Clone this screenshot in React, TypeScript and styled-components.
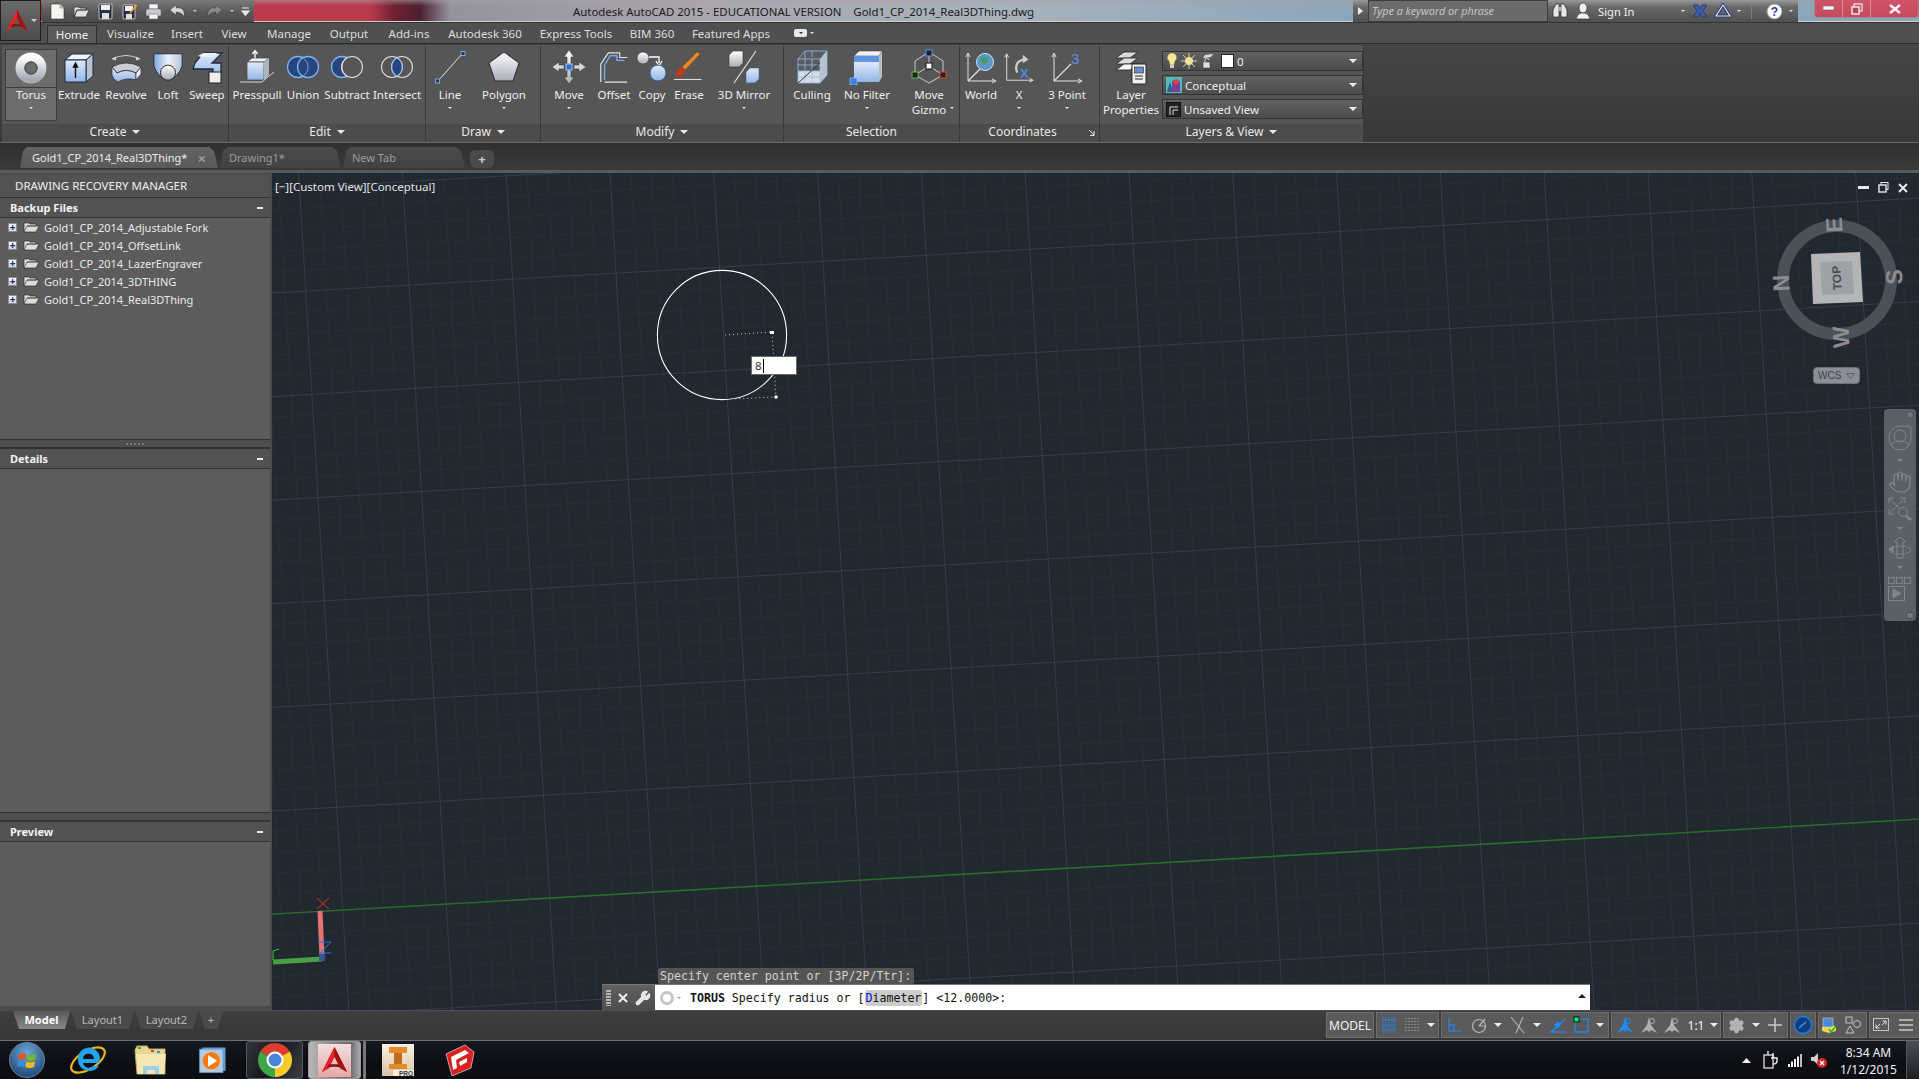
import React from "react";
import styled, { createGlobalStyle } from "styled-components";
import { Settings, Hand, Wrench } from "lucide-react";

const UI = `"Noto Sans", "Open Sans", sans-serif`;

const Global = createGlobalStyle`
  html, body { margin: 0; padding: 0; width: 1919px; height: 1079px; overflow: hidden; background: #3a3a3a; }
  #root { width: 1919px; height: 1079px; }
  * { box-sizing: border-box; }
`;

const Page = styled.div`
  position: relative; width: 1919px; height: 1079px; display: flex; flex-direction: column;
  font-family: ${UI}; font-size: 11.5px; color: #e6e6e6; overflow: hidden;
`;
const DefsSvg = styled.svg`position: absolute; width: 0; height: 0;`;

/* ---------- title bar ---------- */
const TitleBar = styled.header`
  height: 23px; flex: none; display: flex; align-items: flex-start; color: #1a1a1a;
  border-bottom: 1px solid #333;
  box-shadow: inset 0 -1px 0 #cfcfcf;
  background: linear-gradient(rgba(170,160,170,.55), rgba(170,160,170,0) 6px), linear-gradient(90deg, #a82a3a 0, #bc3a4c 250px, #b83a4c 370px, #6e2030 395px, #4a2030 420px, #94939d 450px, #a9a6ac 700px, #a7b3bd 1000px, #8da6b9 1350px, #8da6b9 1919px);
`;
const Qat = styled.div`
  margin-left: 42px; width: 212px; height: 22px; flex: none; display: flex; align-items: center; padding-left: 3px;
  background: linear-gradient(#7a7a7a, #585858 55%, #4c4c4c);
`;
const QatSlot = styled.span<{ $w: number }>`
  width: ${p => p.$w}px; height: 22px; display: flex; align-items: center; justify-content: center; flex: none;
`;
const WindowTitle = styled.div`
  flex: 1; padding-left: 319px; line-height: 23px; font-size: 11.4px; white-space: pre;
`;
const SearchStrip = styled.div`
  width: 445px; height: 22px; flex: none; display: flex; align-items: center; color: #eee;
  background: linear-gradient(#9a9a9a, #6a6a6a 30%, #505050);
`;
const SearchSlot = styled.span<{ $w: number }>`
  width: ${p => p.$w}px; height: 22px; flex: none; display: flex; align-items: center; justify-content: center;
`;
const SearchInput = styled.div`
  width: 180px; height: 22px; flex: none; border: 1px solid #3c3c3c; background: #6b6b6b;
  color: #c4c4c4; font-style: italic; line-height: 20px; padding-left: 3px; font-size: 10.8px;
`;
const SignIn = styled.span`
  width: 82px; flex: none; font-size: 11.2px; color: #f0f0f0; padding-left: 3px;
`;
const Divider = styled.span`width: 1px; height: 16px; background: #7c7c7c; margin: 0 10px 0 8px; flex: none;`;
const WinButtons = styled.div`
  margin-left: 16px; width: 105px; height: 18px; flex: none; display: flex;
  border: 1px solid #9a8a92; border-top: 0; border-radius: 0 0 4px 4px;
  background: linear-gradient(#cf5468, #c94a60);
`;
const WinBtn = styled.span<{ $w: number }>`
  width: ${p => p.$w}px; height: 17px; flex: none; display: flex; align-items: center; justify-content: center;
  border-right: 1px solid #d98a98;
  &:last-child { border-right: 0; }
`;

const AppButton = styled.div`
  position: absolute; left: 0; top: 0; width: 41px; height: 41px; z-index: 3;
  display: flex; align-items: center; padding-left: 4px; gap: 2px;
  border: 1px solid #1e1e1e; background: linear-gradient(#6a6a6a, #4c4c4c);
`;

/* ---------- ribbon ---------- */
const TabRow = styled.nav`
  height: 21px; flex: none; display: flex; padding-left: 47px; align-items: flex-end;
  background: #505050; border-bottom: 1px solid #2c2c2c;
`;
const RibTab = styled.div<{ $w: number; $active?: boolean }>`
  width: ${p => p.$w}px; height: ${p => (p.$active ? 18 : 20)}px; flex: none; text-align: center; font-size: 11.5px;
  line-height: ${p => (p.$active ? 17 : 22)}px; color: ${p => (p.$active ? "#f2f2f2" : "#dcdcdc")};
  ${p => p.$active ? "background:#5a5a5a;border:1px solid #2e2e2e;border-bottom:0;" : ""}
`;
const ViewToggle = styled.div`display: flex; align-items: center; gap: 3px; height: 20px; padding-left: 14px;`;
const ToggleBox = styled.span`
  width: 13px; height: 8px; background: #e8e8e8; border-radius: 2px; display: flex; align-items: center; justify-content: center;
`;
const Ribbon = styled.div`
  height: 99px; flex: none; display: flex; padding: 1px 0 0 2px; border-bottom: 1px solid #6a6a6a;
  background: linear-gradient(#464646, #383838);
`;
const Panel = styled.section<{ $w: number }>`
  width: ${p => p.$w}px; flex: none; height: 97px; display: flex; flex-direction: column;
  background: #565656; border-right: 1px solid #3a3a3a;
`;
const PanelBody = styled.div`height: 79px; display: flex; flex: none;`;
const PanelCaption = styled.div<{ $pr?: number }>`
  height: 18px; flex: none; position: relative; background: #4c4c4c; display: flex; align-items: center; justify-content: center; gap: 6px;
  font-size: 12px; line-height: 16px; color: #e8e8e8; padding: 0 ${p => p.$pr ?? 0}px 2px 0;
`;
const CornerArrow = styled.svg`position: absolute; right: 3px; top: 6px;`;
const Caret = styled.span<{ $s?: number; $c?: string }>`
  display: inline-block; flex: none; width: 0; height: 0;
  border-left: ${p => p.$s ?? 3}px solid transparent; border-right: ${p => p.$s ?? 3}px solid transparent;
  border-top: ${p => p.$s ?? 3}px solid ${p => p.$c ?? "#e8e8e8"};
`;
const RibBtn = styled.div<{ $w: number; $active?: boolean; $ml?: number }>`
  width: ${p => p.$w}px; flex: none; position: relative; margin-left: ${p => p.$ml ?? 0}px;
  display: flex; flex-direction: column; align-items: center; padding-top: 4px;
  ${p => p.$active ? `height:72px;margin-top:4px;padding-top:0;background:#6c6c6c;border:1px solid #3c3c3c;` : ""}
`;
const RibIcon = styled.div<{ $active?: boolean }>`
  height: ${p => (p.$active ? 38 : 36)}px; align-self: stretch; display: flex; align-items: center; justify-content: center;
  ${p => p.$active ? "border-bottom:1px solid #3c3c3c;" : ""}
`;
const RibLabel = styled.div<{ $active?: boolean }>`
  margin-top: ${p => (p.$active ? -1 : 2)}px; font-size: 11.5px; line-height: 15px; text-align: center; white-space: pre; color: #eee;
  display: flex; flex-direction: column; align-items: center;
`;
const RibCaret = styled.div`height: 8px; margin-top: 2px; display: flex; align-items: center;`;
const SideCaret = styled.span`position: absolute; right: 10px; top: 52px;`;
const ComboStack = styled.div`width: 201px; flex: none; display: flex; flex-direction: column; gap: 4px; padding-top: 6px;`;
const Combo = styled.div`
  height: 20px; border: 1px solid #333; background: linear-gradient(#626262, #4c4c4c);
  display: flex; align-items: center; padding: 0 5px 0 3px; gap: 3px; font-size: 11.5px; color: #eee;
`;
const ComboText = styled.span`flex: 1;`;

/* ---------- file tabs ---------- */
const FileBar = styled.div`
  height: 27px; flex: none; display: flex; align-items: flex-end; padding: 0 0 2px 20px; gap: 2px;
  background: linear-gradient(#2f2f2f, #3a3a3a);
`;
const FileTab = styled.div<{ $w: number; $active?: boolean }>`
  width: ${p => p.$w}px; height: 21px; flex: none; display: flex; align-items: center; padding-left: ${p => (p.$active ? 12 : 9)}px;
  clip-path: polygon(7px 0, calc(100% - 9px) 0, calc(100% - 4px) 4px, 100% 100%, 0 100%, 3px 4px);
  background: ${p => (p.$active ? "linear-gradient(#626262,#5a5a5a)" : "linear-gradient(#4a4a4a,#434343)")};
  color: ${p => (p.$active ? "#ececec" : "#9c9c9c")}; font-size: 11px;
`;
const FileClose = styled.span`margin-left: auto; margin-right: 12px; color: #9a9a9a; font-size: 15px; font-weight: 700;`;
const PlusTab = styled.div`
  width: 24px; height: 18px; flex: none; margin: 0 0 0 3px; display: flex; align-items: center; justify-content: center;
  background: #4a4a4a; border-radius: 5px 5px 6px 6px; color: #cfcfcf; font-size: 13px; font-weight: 700; line-height: 1;
`;

/* ---------- main ---------- */
const Main = styled.main`
  flex: 1; min-height: 0; display: flex; padding-top: 3px; background: #5a5a5a;
`;
const Palette = styled.aside`
  width: 272px; flex: none; display: flex; flex-direction: column; background: #4c4c4c; padding-right: 2px; padding-top: 2px;
`;
const PaletteTitle = styled.div`
  height: 22px; flex: none; line-height: 21px; padding-left: 15px; font-size: 11.5px; color: #efefef; background: #525252; border-radius: 5px 5px 0 0;
`;
const SectionHead = styled.div`
  height: 21px; flex: none; display: flex; align-items: center; justify-content: space-between; padding: 0 7px 0 10px;
  background: #525252; border-top: 1px solid #333; border-bottom: 1px solid #333;
  font-weight: 700; font-size: 11px; color: #f2f2f2;
`;
const Minus = styled.span`width: 6px; height: 2px; background: #eee;`;
const SectionBody = styled.div<{ $h: number }>`
  height: ${p => p.$h}px; flex: none; background: #5c5c5c;
`;
const Splitter = styled.div`
  height: 9px; flex: none; background: #4e4e4e; border-top: 1px solid #333; border-bottom: 1px solid #333;
  display: flex; align-items: center; justify-content: center; gap: 2px;
`;
const Grip = styled.span`width: 2px; height: 2px; background: #787878;`;
const TreeRow = styled.div`
  height: 18px; display: flex; align-items: center; padding-left: 8px; color: #eaeaea; font-size: 11px; white-space: pre; position: relative;
`;
const Plus = styled.span`
  width: 9px; height: 9px; flex: none; background: linear-gradient(#fff, #cfd3de); border: 1px solid #8d8d8d; color: #1f2f80;
  font-size: 10px; line-height: 6px; font-weight: 700; text-align: center; margin-right: 6px;
`;
const TreeLabel = styled.span`margin-left: 5px;`;

const Viewport = styled.div`
  position: relative; flex: 1; min-width: 0; background: #212830; overflow: hidden;
`;
const Scene = styled.svg`position: absolute; left: 0; top: 0; width: 1647px; height: 837px;`;
const ViewLabel = styled.div`
  position: absolute; left: 3px; top: 6px; font-size: 11.5px; color: #e2e2e2; white-space: pre;
`;
const DynInput = styled.div`
  position: absolute; left: 479px; top: 183px; width: 46px; height: 19px; background: #fff; border: 1px solid #6a6a6a;
  color: #333; font-size: 11.5px; line-height: 17px; padding-left: 3px; display: flex; align-items: center;
`;
const TextCaret = styled.span`width: 1px; height: 14px; background: #000; margin-left: 1px;`;
const ViewCtl = styled.div`
  position: absolute; right: 11px; top: 9px; display: flex; align-items: center; gap: 9px;
`;
const WcsPill = styled.div`
  position: absolute; left: 1541px; top: 194px; width: 47px; height: 17px; border-radius: 4px; background: #8b8e98; border: 1px solid #6e7078;
  color: #3f434b; font: 10px "Liberation Sans", sans-serif; display: flex; align-items: center; gap: 5px; padding-left: 4px;
`;
const NavBar = styled.div`
  position: absolute; left: 1612px; top: 236px; width: 32px; height: 212px; background: #5a6067; border-radius: 4px;
  display: flex; flex-direction: column; align-items: center; padding-top: 14px;
`;
const NavSlot = styled.div<{ $h: number }>`
  height: ${p => p.$h}px; flex: none; display: flex; align-items: center; justify-content: center;
`;
const NavClose = styled.span`
  position: absolute; right: 2px; top: 2px; width: 8px; height: 8px; border-radius: 50%; background: #6e747b; border: 1px solid #4a5056;
`;
const NavBottom = styled.span`
  position: absolute; right: 2px; bottom: 2px; width: 8px; height: 7px; border-radius: 2px; background: #6e747b; border: 1px solid #4a5056;
`;
const History = styled.div`
  position: absolute; left: 386px; top: 795px; width: 256px; height: 16px; background: #555; border-radius: 2px;
  font: 11.6px "DejaVu Sans Mono", monospace; color: #d2d2d2; line-height: 16px; padding-left: 2px; white-space: pre;
`;
const CmdBar = styled.div`
  position: absolute; left: 330px; top: 811px; width: 988px; height: 26px; display: flex; border-top: 1px solid #777;
`;
const CmdTools = styled.div`
  width: 53px; flex: none; background: linear-gradient(#626262, #4c4c4c); display: flex; align-items: center; padding-left: 4px; gap: 7px;
`;
const CmdGrip = styled.span`width: 5px; height: 16px; flex: none; background: repeating-linear-gradient(#b5b5b5 0 2px, transparent 2px 3px);`;
const CmdField = styled.div`
  flex: 1; background: #fff; display: flex; align-items: center; padding-left: 4px; gap: 2px; position: relative;
  font: 11.6px "DejaVu Sans Mono", monospace; color: #111; white-space: pre;
`;
const CmdKey = styled.span`background: #ccc; border-radius: 3px; padding: 1px 1px;`;
const Blue = styled.span`color: #0b16d4;`;
const CmdUp = styled.span`
  position: absolute; right: 4px; top: 9px; width: 0; height: 0; border-left: 4px solid transparent; border-right: 4px solid transparent; border-bottom: 4px solid #222;
`;

/* ---------- bottom bar ---------- */
const BottomBar = styled.div`
  height: 30px; flex: none; display: flex; background: linear-gradient(#3e3e3e, #363636); border-top: 1px solid #4e4e4e;
`;
const LayoutTabs = styled.div`display: flex; padding-left: 13px; gap: 1px; height: 19px; align-items: flex-start;`;
const LayoutTab = styled.div<{ $w: number; $active?: boolean }>`
  width: ${p => p.$w}px; height: 18px; flex: none; text-align: center; line-height: 17px; font-size: 11px;
  clip-path: polygon(0 0, 100% 0, calc(100% - 5px) 100%, 6px 100%);
  background: ${p => (p.$active ? "linear-gradient(#5a5a5a,#888)" : "#4a4a4a")};
  color: ${p => (p.$active ? "#fff" : "#b9b9b9")}; font-weight: ${p => (p.$active ? 700 : 400)};
`;
const StatusStrip = styled.div`
  margin-left: auto; width: 594px; height: 26px; margin-top: 1px; display: flex; gap: 2px; padding: 0 0 0 1px; flex: none; background: #3e3e3e;
`;
const StatusGroup = styled.div<{ $w: number }>`
  width: ${p => p.$w}px; flex: none; height: 26px; display: flex; align-items: center; background: #5a5a5a; border: 1px solid #6e6e6e;
  &:last-child { border-right: 0; }
`;
const SItem = styled.span<{ $w: number }>`
  width: ${p => p.$w}px; flex: none; display: flex; align-items: center; justify-content: center; height: 24px; color: #f2f2f2; font-size: 12px;
`;

/* ---------- taskbar ---------- */
const Taskbar = styled.footer`
  height: 39px; flex: none; display: flex; border-top: 1px solid #6a6e74;
  background: linear-gradient(#15181f, #0c0e14 60%, #0d0f15);
`;
const TaskItem = styled.div<{ $w: number; $on?: number; $ml?: number }>`
  width: ${p => p.$w}px; flex: none; margin-left: ${p => p.$ml ?? 0}px; display: flex; align-items: center; justify-content: center;
  ${p => p.$on === 1 ? "background:linear-gradient(115deg,#34363c,#14161c 45%,#3c3e44);border:1px solid #55585e;border-radius:3px;" : ""}
  ${p => p.$on === 2 ? "background:linear-gradient(90deg,#b8b8b8,#666 80%,#aaa);border:1px solid #9a9a9a;border-radius:3px;" : ""}
`;
const Sliver = styled.div`width: 3px; margin-left: 2px; flex: none; background: #777; border-radius: 1px;`;
const Tray = styled.div`margin-left: auto; display: flex; align-items: center; flex: none;`;
const TraySlot = styled.span<{ $w: number }>`
  width: ${p => p.$w}px; flex: none; display: flex; align-items: center; justify-content: center;
`;
const Clock = styled.div`
  width: 75px; flex: none; text-align: center; color: #f2f2f2; font-size: 12px; line-height: 17px; padding-top: 1px;
`;
const ShowDesktop = styled.div`
  width: 13px; height: 38px; flex: none; background: linear-gradient(#4c4f55, #1c1e24); border-left: 1px solid #555;
`;

/* ---------- icons ---------- */
type S = { s?: number };
const V = ({ children, s = 36, box = 36 }: { children: React.ReactNode; s?: number; box?: number }) => (
  <svg width={s} height={s} viewBox={`0 0 ${box} ${box}`}>{children}</svg>
);
const BL = "#24467c";
const OL = "#7fb0ee";

const ITorus = () => <V><circle cx="18" cy="17" r="11" fill="none" stroke="url(#gW)" strokeWidth="9" /><circle cx="18" cy="17" r="6.2" fill="none" stroke="#333" strokeWidth=".8" /></V>;
const IExtrude = () => <V>
  <path d="M4 11 L11 5 H32 L25 11Z" fill="#eef3fb" stroke="#1d2a44" /><path d="M25 11 L32 5 V27 L25 33Z" fill="#b9c1cc" stroke="#1d2a44" />
  <rect x="4" y="11" width="21" height="22" fill="url(#gB)" stroke="#1d2a44" /><path d="M14.5 29 V16 M12.5 18 L14.5 14 L16.5 18Z" stroke="#111" strokeWidth="1.4" fill="#111" />
</V>;
const IRevolve = () => <V>
  <path d="M4 10 Q18 3 32 10" fill="none" stroke="#d8d8d8" strokeWidth="1.2" /><path d="M4 10 l4 -2.5 l0 4z M32 10 l-4 -2.5 l0 4z" fill="#d8d8d8" />
  <path d="M4 18 Q18 10 33 18 L28 24 Q18 19 9 24Z" fill="#c9ccd2" stroke="#223" strokeWidth=".7" />
  <path d="M4 18 L4 26 Q5 31 10 33 Q18 28 28 31 L28 24 Q18 19 9 24 Z" fill="url(#gB)" stroke="#223" strokeWidth=".7" />
  <path d="M28 24 L33 18 V25 L28 31Z" fill="#f0f0f0" stroke="#223" strokeWidth=".7" />
</V>;
const ILoft = () => <V>
  <path d="M3 4 H33 V17 Q30 27 18 33 Q6 27 3 17Z" fill="url(#gB2)" stroke="#1d2a44" /><circle cx="18" cy="24" r="8" fill="url(#gW)" stroke="#222" />
</V>;
const ISweep = () => <V>
  <path d="M6 14 L14 4 H33 L23 14 H32 V24 L24 28 V20 H10 L4 20Z" fill="url(#gB)" stroke="#1d2a44" strokeWidth="1.3" />
  <path d="M9 7 L14 4 H28 L24 8 H12Z" fill="#e8f0fb" /><rect x="20" y="23" width="12" height="11" fill="#eee" stroke="#222" />
</V>;
const IPress = () => <V>
  <path d="M8 13 L13 9 H30 L25 13Z" fill="#eef3fb" stroke="#333" strokeWidth=".7" /><rect x="8" y="13" width="17" height="18" fill="url(#gB)" stroke="#444" strokeWidth=".7" />
  <path d="M25 13 L30 9 V26 L25 31Z" fill="#aeb5c0" /><path d="M16 9 V2 M13.5 5 L16 1.5 L18.5 5" stroke="#fff" strokeWidth="1.3" fill="none" />
  <path d="M1 33 H23 L35 23" stroke="#e8e8e8" strokeWidth=".9" fill="none" />
</V>;
const IUnion = () => <V><circle cx="13" cy="18" r="10.5" fill={BL} stroke={OL} strokeWidth="1.3" /><circle cx="23" cy="18" r="10.5" fill={BL} stroke={OL} strokeWidth="1.3" /><path d="M18 9 a10.5 10.5 0 0 1 0 18 a10.5 10.5 0 0 1 0 -18" fill={BL} stroke={OL} strokeWidth=".9" /></V>;
const ISubtract = () => <V><circle cx="13" cy="18" r="10.5" fill={BL} stroke={OL} strokeWidth="1.3" /><circle cx="23" cy="18" r="10.5" fill="#565656" stroke="#ddd" strokeWidth="1.1" /><path d="M18 9 a10.5 10.5 0 0 0 0 18" fill="none" stroke="#ddd" strokeWidth="1" /></V>;
const IIntersect = () => <V><circle cx="13" cy="18" r="10.5" fill="none" stroke="#ddd" strokeWidth="1.1" /><circle cx="23" cy="18" r="10.5" fill="none" stroke="#ddd" strokeWidth="1.1" /><path d="M18 9 a10.5 10.5 0 0 1 0 18 a10.5 10.5 0 0 1 0 -18" fill={BL} stroke={OL} strokeWidth="1" /></V>;
const ILine = () => <V><path d="M6 32 L30 5" stroke="#e4e4e4" strokeWidth="1" /><rect x="3.5" y="30" width="4" height="4" fill="#333" stroke="#6fa8ff" /><rect x="29" y="2.5" width="4" height="4" fill="#333" stroke="#6fa8ff" /></V>;
const IPoly = () => <V><path d="M18 3 L33 14 L27 32 H9 L3 14Z" fill="url(#gW)" stroke="#2a2a2a" /></V>;
const IMove = () => <V>
  <path d="M18 1 L23 8 H20 V15 H16 V8 H13Z M18 35 L23 28 H20 V21 H16 V28 H13Z M1 18 L8 13 V16 H13 V20 H8 V23Z M35 18 L28 13 V16 H23 V20 H28 V23Z" fill="url(#gW)" stroke="#333" strokeWidth=".5" />
  <rect x="15" y="15" width="6" height="6" fill="#2f6ec9" stroke="#9cc4ff" />
</V>;
const IOffset = () => <V>
  <path d="M8 32 V16 L14 6 H21 V11 H29" fill="none" stroke="#76a8ec" strokeWidth="1.5" />
  <path d="M4 34 V15 L12 3 H24 V8 H32 M8 34 H32" fill="none" stroke="#e6e6e6" strokeWidth="1.2" />
</V>;
const ICopy = () => <V><circle cx="9" cy="9" r="6" fill="url(#gW)" stroke="#333" strokeWidth=".6" /><path d="M15 8 H25 V14 M22 12 L25 17 L28 12" stroke="#fff" strokeWidth="1.3" fill="none" /><circle cx="24" cy="24" r="8" fill="url(#gB)" stroke="#3a5f96" /></V>;
const IErase = () => <V><path d="M31 3 L14 21 L10 18 L27 1Z" fill="#e08a2a" stroke="#5a3410" strokeWidth=".6" /><path d="M10 18 L14 22 L10 28 L3 29 L5 22Z" fill="#c43a1c" /><path d="M1 32 H32" stroke="#ddd" strokeWidth="1.2" /></V>;
const IMirror = () => <V>
  <path d="M3 6 L7 2 H17 V14 L13 18 H3Z" fill="url(#gW)" stroke="#333" strokeWidth=".6" />
  <path d="M30 2 L8 34" stroke="#e8e8e8" strokeWidth="1.1" />
  <path d="M20 23 L24 19 H33 V30 L29 34 H20Z" fill="url(#gB)" stroke="#3a5f96" strokeWidth=".6" />
</V>;
const ICulling = () => <V>
  <path d="M4 10 L11 2 H33 V26 L26 34 H4Z" fill="#5b5b5b" /><path d="M26 10 L33 2 V26 L26 34Z" fill="#bfc3c9" /><path d="M4 22 H26 V34 H4Z" fill="#d9dce0" />
  <path d="M4 10 H26 V34 H4Z M4 10 L11 2 H33 L26 10 M33 2 V26 L26 34 M11 10 V34 M18 10 V34 M4 16 H26 M4 22 H26 M4 28 H26 M11 2 V10 M18 2 V8 M26 22 L33 14" fill="none" stroke="#8fbdf5" strokeWidth=".8" />
  <path d="M4 34 L26 14" stroke="#333" strokeWidth="1" />
</V>;
const INoFilter = () => <V>
  <path d="M5 7 L10 2 H33 L30 7Z" fill="#eef0f3" stroke="#333" strokeWidth=".5" /><rect x="5" y="7" width="25" height="6" fill="#5f96e0" /><rect x="5" y="13" width="25" height="20" fill="url(#gB)" /><path d="M30 7 L33 2 V28 L30 33Z" fill="#b8bcc2" />
  <rect x="1" y="29" width="7" height="7" fill="#3f7fe0" stroke="#9cc4ff" strokeWidth=".6" />
</V>;
const IGizmo = () => <V>
  <path d="M18 3 L32 12 V26 L18 34 L4 26 V12Z M18 17 V3 M18 17 L4 26 M18 17 L32 26" fill="none" stroke="#e6e6e6" strokeWidth=".8" />
  <rect x="15" y="1" width="6" height="6" fill="#222" stroke="#4f90f0" /><rect x="15" y="14" width="6" height="6" fill="#fff" stroke="#111" />
  <rect x="1" y="23" width="6" height="6" fill="#222" stroke="#5bbb3a" /><rect x="29" y="23" width="6" height="6" fill="#222" stroke="#e04a2c" />
</V>;
const Axes = () => <g fill="none" stroke="#e2e2e2" strokeWidth="1"><path d="M5 32 V5 M3 8 L5 4 L7 8 M5 32 H32 M29 30 L33 32 L29 34" /></g>;
const IWorld = () => <V><Axes /><path d="M5 32 L19 18" stroke="#e2e2e2" strokeWidth="1.2" /><circle cx="22" cy="13" r="8.5" fill="#5b97c9" stroke="#cfe2f3" /><path d="M17 10 q5 -4 8 0 q1 4 -3 5 q-4 -1 -5 -5z" fill="#4a9a6a" /></V>;
const IX = () => <V><Axes /><path d="M16 24 Q12 12 24 10" fill="none" stroke="#cfcfcf" strokeWidth="2.4" /><path d="M22 5 L28 10 L22 14Z" fill="#cfcfcf" /><text x="19" y="30" fontSize="14" fontFamily="Liberation Sans" fill="#4f86e0" fontWeight="700">X</text></V>;
const I3P = () => <V><Axes /><path d="M5 32 L22 15" stroke="#e2e2e2" strokeWidth="1.1" /><text x="22" y="15" fontSize="15" fontFamily="Liberation Sans" fill="#5b92ea">3</text></V>;
const ILayers = () => <V>
  {[3, 9, 15].map(y => <path key={y} d={`M3 ${y + 6} L11 ${y} H25 L17 ${y + 6}Z`} fill={y === 15 ? "#f4f4f4" : "#dcdcdc"} stroke="#222" strokeWidth=".8" />)}
  <rect x="19" y="15" width="14" height="20" rx="1" fill="#f2f2f2" stroke="#222" /><rect x="21.5" y="18" width="9" height="6" fill="#6a8fc8" stroke="#222" strokeWidth=".6" />
  <path d="M22 27 h8 M22 30 h8" stroke="#222" strokeWidth="1" />
</V>;

const LogoA = ({ s = 30 }: S) => <svg width={s} height={s} viewBox="0 0 30 30">
  <path d="M15 1 L28 27 L21 23 L15 11 L9 23 L2 27Z" fill="#c8191c" /><path d="M15 1 L15 11 L9 23 L2 27Z" fill="#e0262a" />
  <path d="M9 19 H21 L23 23 Q15 20 7 23Z" fill="#8d0f12" /><path d="M15 11 L21 23 L28 27 L15 1Z" fill="#a31214" />
</svg>;

const Q = ({ children }: { children: React.ReactNode }) => <svg width="17" height="17" viewBox="0 0 17 17">{children}</svg>;
const QNew = () => <Q><path d="M2 1 H11 L15 5 V16 H2Z" fill="#f4f4f0" stroke="#333" strokeWidth=".6" /><path d="M11 1 V5 H15" fill="#ccc" stroke="#666" strokeWidth=".5" /></Q>;
const QOpen = () => <Q><path d="M1 14 V4 H6 L7 5 H13 V7 H4 L1 14 L4 7 H16 L13 14Z" fill="#e2e2da" stroke="#333" strokeWidth=".8" /></Q>;
const QSave = () => <Q><rect x="2" y="1" width="13" height="15" rx="1" fill="#27303f" stroke="#ddd" strokeWidth=".8" /><rect x="4" y="2" width="9" height="5" fill="#f0f0f0" /><rect x="5" y="10" width="7" height="6" fill="#e0e0e0" /></Q>;
const QSaveAs = () => <Q><rect x="2" y="2" width="12" height="14" rx="1" fill="#27303f" stroke="#ddd" strokeWidth=".8" /><rect x="4" y="3" width="8" height="5" fill="#f0f0f0" /><rect x="5" y="11" width="6" height="5" fill="#e0e0e0" /><path d="M15 1 L9 9 L8 11 L10 10 L16 3Z" fill="#e8a23a" /></Q>;
const QPrint = () => <Q><rect x="4" y="1" width="9" height="5" fill="#f2f2f2" stroke="#555" strokeWidth=".5" /><rect x="1" y="6" width="15" height="7" rx="1.5" fill="#c9ccd2" stroke="#555" strokeWidth=".5" /><rect x="4" y="11" width="9" height="5" fill="#f2f2f2" stroke="#555" strokeWidth=".5" /></Q>;
const QUndo = ({ c = "#d8d8d8", flip = false }: { c?: string; flip?: boolean }) => <Q><g transform={flip ? "translate(17 0) scale(-1 1)" : undefined}><path d="M1 7 L7 2 V5 H11 Q16 6 15 14 Q13 9 7 9 V12Z" fill={c} stroke="#333" strokeWidth=".4" /></g></Q>;
const QMenu = () => <svg width="9" height="9" viewBox="0 0 9 9"><path d="M1 1 H8 M1 4 H8 L4.5 8Z" stroke="#eee" strokeWidth="1.2" fill="#eee" /></svg>;

const Mini = ({ children, w = 18, h = 18 }: { children: React.ReactNode; w?: number; h?: number }) => <svg width={w} height={h} viewBox={`0 0 ${w} ${h}`}>{children}</svg>;
const Binoc = () => <Mini><path d="M3 6 L5 2 H8 V15 H2 V8Z M15 6 L13 2 H10 V15 H16 V8Z" fill="#e8e8e8" stroke="#222" strokeWidth=".7" /><rect x="8" y="5" width="2" height="4" fill="#bbb" /></Mini>;
const User = () => <Mini><ellipse cx="9" cy="6" rx="4" ry="5" fill="#f0f0f0" stroke="#222" strokeWidth=".6" /><path d="M2 17 Q3 12 7 11 H11 Q15 12 16 17Z" fill="#f0f0f0" stroke="#222" strokeWidth=".6" /></Mini>;
const XIcon = () => <Mini w={16} h={16}><path d="M1 2 H6 L8 6 L10 2 H15 L11 8 L15 14 H10 L8 10 L6 14 H1 L5 8Z" fill="#3a5fae" stroke="#1b2e66" strokeWidth=".6" /></Mini>;
const A360 = () => <Mini w={18} h={16}><path d="M9 2 L16 13 H2Z" fill="none" stroke="#23387e" strokeWidth="3.2" /><path d="M9 2 L16 13 H2Z" fill="none" stroke="#e4e8f0" strokeWidth="1.2" /></Mini>;
const Help = () => <svg width="17" height="17" viewBox="0 0 17 17"><circle cx="8.5" cy="8.5" r="7.5" fill="#fff" stroke="#999" /><text x="8.5" y="13" textAnchor="middle" fontSize="12" fontWeight="700" fontFamily="Liberation Sans" fill="#1f3f9e">?</text></svg>;

const Bulb = () => <Mini w={12} h={18}><path d="M6 1 a4.5 4.5 0 0 1 3 8 L8 13 H4 L3 9 a4.5 4.5 0 0 1 3 -8z" fill="#f6e89a" stroke="#8a7a30" strokeWidth=".5" /><rect x="4" y="13" width="4" height="3" fill="#ccc" /></Mini>;
const Sun = () => <Mini w={16} h={16}><g stroke="#d8cf9a" strokeWidth="1"><path d="M8 0 V16 M0 8 H16 M2 2 L14 14 M14 2 L2 14" /></g><circle cx="8" cy="8" r="4" fill="#efe29a" /></Mini>;
const Lock = () => <Mini w={16} h={16}><path d="M5 2 L13 1 L11 4 L3 5Z" fill="#ddd" /><rect x="3" y="9" width="7" height="6" fill="#ddd" stroke="#333" strokeWidth=".5" /><path d="M5 9 V7 a2 2 0 0 1 4 0" stroke="#ddd" fill="none" /></Mini>;
const Swatch = styled.span`display: inline-block; width: 13px; height: 14px; background: #fff; border: 1px solid #222; margin-left: 2px;`;
const Concept = () => <Mini w={16} h={16}><rect width="16" height="16" fill="#4fb9bb" /><path d="M1 15 L4 5 L7 15Z" fill="#2d5a8e" /><path d="M6 15 L6 4 L11 2 L14 5 L14 15Z" fill="#7a3f90" /><circle cx="10" cy="5" r="2.5" fill="#d44" /></Mini>;
const ViewIco = () => <Mini w={15} h={15}><rect x=".5" y=".5" width="14" height="14" fill="#222" stroke="#111" /><path d="M4 13 V5 H12 M7 13 V8 H12" stroke="#ddd" fill="none" /></Mini>;

const FolderIco = () => <Mini w={16} h={12}><path d="M1 11 V2 H6 L7 3 H13 V5 H4 L1 11 H13 L16 5 H4" fill="#dcdcd8" stroke="#222" strokeWidth=".6" /></Mini>;

const St = { on: "#1c8cff", off: "#b8b8b8" };
const SGrid = () => <Mini w={16} h={18}><g stroke={St.on} strokeWidth="1" strokeDasharray="1 .6"><path d="M2 1 V17 M5 1 V17 M8 1 V17 M11 1 V17 M14 1 V17 M1 4 H15 M1 9 H15 M1 14 H15" /></g></Mini>;
const SDots = () => <Mini w={16} h={18}><g stroke="#b4b4b4" strokeWidth="1" strokeDasharray="1 2"><path d="M2 2 V17 M5 2 V17 M8 2 V17 M11 2 V17 M14 2 V17" /></g></Mini>;
const SOrtho = () => <Mini><path d="M3 2 V15 H16 M3 9 H8 V15" fill="none" stroke={St.on} strokeWidth="1.2" /></Mini>;
const SPolar = () => <Mini><circle cx="9" cy="10" r="6.5" fill="none" stroke={St.off} strokeWidth="1.2" /><path d="M9 10 L15 3 M9 10 H16" stroke={St.off} strokeWidth="1.2" /></Mini>;
const SSnap = () => <Mini><path d="M2 1 L15 17 M14 1 L7 17" stroke={St.off} strokeWidth="1.1" fill="none" /></Mini>;
const SIso = () => <Mini><path d="M1 16 H17 M2 16 L16 3" stroke={St.on} strokeWidth="1.2" fill="none" /><rect x="6" y="7" width="5" height="5" fill={St.on} transform="rotate(-40 8 9)" /></Mini>;
const SOsnap = () => <Mini><rect x="2" y="3" width="13" height="13" fill="none" stroke={St.on} strokeWidth="1.2" /><rect x="1" y="1" width="5" height="5" fill="#0f6" stroke="#111" /></Mini>;
const SMan = ({ c }: { c: string }) => <Mini><path d="M9 1 L11 9 L17 17 L11 14 L9 16 L7 14 L1 17 L7 9Z" fill={c} /><circle cx="12" cy="5" r="2.5" fill="none" stroke={c} /></Mini>;
const SBlue = () => <Mini w={20} h={20}><circle cx="10" cy="10" r="8.5" fill="#103e7e" stroke="#1a7ee8" strokeWidth="1.4" /><path d="M6 13 L13 7" stroke="#3ea0ff" strokeWidth="1.2" /></Mini>;
const SPlus = () => <Mini><path d="M9 2 V16 M2 9 H16" stroke="#c9c9c9" strokeWidth="1.5" /></Mini>;
const SLic = () => <Mini><path d="M2 11 L9 7 L16 11 V15 L9 17 L2 15Z" fill="#e8d84c" /><rect x="3" y="2" width="10" height="9" fill="#4c88d8" stroke="#ddd" strokeWidth=".5" /><path d="M9 13 L11 16 L16 10" stroke="#2fb02f" strokeWidth="1.6" fill="none" /></Mini>;
const SIsolate = () => <Mini><rect x="2" y="1" width="6" height="6" fill="none" stroke="#c4c4c4" /><circle cx="13" cy="8" r="3.5" fill="none" stroke="#c4c4c4" /><path d="M6 10 L10 17 H2Z" fill="none" stroke="#c4c4c4" /></Mini>;
const SClean = () => <Mini w={18} h={14}><rect x=".5" y=".5" width="15" height="12" fill="none" stroke="#c4c4c4" /><path d="M3 10 L7 6 M3 6.5 V10 H6.5 M13 3 L9 7 M9.5 3 H13 V6.5" stroke="#e2e2e2" fill="none" /></Mini>;
const SMenu = () => <Mini><path d="M2 4 H16 M2 9 H16 M2 14 H16" stroke="#c9c9c9" strokeWidth="1.6" /></Mini>;

const T = ({ children, s = 36 }: { children: React.ReactNode; s?: number }) => <svg width={s} height={s} viewBox="0 0 36 36">{children}</svg>;
const TOrb = () => <T><circle cx="18" cy="18" r="17.5" fill="url(#gOrb)" stroke="#8aa0b8" strokeWidth=".7" />
  <path d="M10 12 Q14 10 17 12 L16 18 Q13 16 9 18Z" fill="#e2562a" /><path d="M18.5 12 Q22 14 27 12 L26 18 Q22 20 17.5 18Z" fill="#76b82a" />
  <path d="M9 19.5 Q13 18 15.8 19.5 L15 25 Q12 23.5 8 25Z" fill="#2f8fe0" /><path d="M17.3 19.5 Q22 21.5 26 19.5 L25 25 Q21 27 16.3 25Z" fill="#f4b81c" /></T>;
const TIE = () => <T><ellipse cx="18" cy="18" rx="19" ry="9" fill="none" stroke="#eeb21a" strokeWidth="2.2" transform="rotate(-32 18 18)" />
  <path d="M8 18 a11 11 0 1 1 21 3 H13 a6 6 0 0 0 10 3 h6 a11.500 11.500 0 0 1 -21 -6z M13 17 H24 a5.500 5.500 0 0 0 -11 0z" fill="#22a4e6" fillRule="evenodd" /></T>;
const TFolder = () => <T><path d="M2 8 L4 4 H14 L16 7 H32 V32 H4Z" fill="#e8d592" stroke="#bfa95e" /><rect x="5" y="5" width="3" height="2" fill="#3aa04a" /><rect x="18" y="8" width="3" height="2" fill="#c84040" /><rect x="24" y="9" width="3" height="2" fill="#3a8ad0" />
  <path d="M3 12 H33 L31 32 H5Z" fill="#f4e7b4" /><path d="M10 32 V24 H26 V32 H22 V28 H14 V32Z" fill="#9fd0ea" /></T>;
const TMedia = () => <T s={30}><rect x="5" y="3" width="28" height="28" fill="#6a9bd0" /><rect x="2" y="5" width="28" height="28" fill="#a9cde8" stroke="#6a9bd0" /><circle cx="16" cy="19" r="11" fill="#ee7a1c" stroke="#f8c89a" /><path d="M12 12 L23 19 L12 26Z" fill="#fff" /></T>;
const TChrome = () => <T><path d="M3.300 9.500 A17 17 0 0 1 32.700 9.500 L18 18Z" fill="#dc3d32" /><path d="M32.700 9.500 A17 17 0 0 1 18 35 L18 18Z" fill="#f8ca2e" /><path d="M18 35 A17 17 0 0 1 3.300 9.500 L18 18Z" fill="#3da647" /><circle cx="18" cy="18" r="8.500" fill="#fff" /><circle cx="18" cy="18" r="6.500" fill="#4a84d8" /></T>;
const TAcad = () => <svg width="33" height="33" viewBox="0 0 33 33"><rect width="33" height="33" fill="url(#gPink)" /><g transform="translate(2 2)"><LogoA s={29} /></g></svg>;
const TInv = () => <svg width="32" height="32" viewBox="0 0 32 32"><rect width="32" height="32" fill="url(#gTan)" /><path d="M7 3 H25 V9 H20 V20 H25 V25 H7 V20 H12 V9 H7Z" fill="#e08a2c" /><path d="M12 9 H20 V20 H12Z" fill="#c06a1c" /><rect x="11" y="26" width="21" height="6" fill="#fff" opacity=".7" /><text x="31" y="31.500" textAnchor="end" fontSize="6.500" fontWeight="700" fontFamily="Liberation Sans" fill="#333">PRO</text></svg>;
const TSketch = () => <svg width="30" height="32" viewBox="0 0 30 32"><path d="M1 10 L20 1 L29 8 L26 24 L7 32Z" fill="#d8201f" stroke="#fff" strokeWidth=".6" /><path d="M6 13 L20 6 L24 9 L11 16 L12 24 L8 26Z M14 18 L22 14 L22 18 L15 22Z" fill="#fff" /></svg>;

const Plug = () => <Mini w={16} h={20}><rect x="2" y="5" width="9" height="13" fill="none" stroke="#eee" strokeWidth="1.2" /><path d="M6 5 V1 M11 3 V8 M9 8 H15 V11 Q15 14 11 14" stroke="#eee" strokeWidth="1.4" fill="none" /></Mini>;
const Signal = () => <Mini w={16} h={14}>{[0, 1, 2, 3, 4].map(i => <rect key={i} x={1 + i * 3} y={11 - i * 2.5} width="2" height={3 + i * 2.5} fill={i < 4 ? "#eee" : "#bbb"} />)}</Mini>;
const Volume = () => <Mini w={18} h={18}><path d="M1 6 H4 L8 2 V14 L4 10 H1Z" fill="#cfcfcf" /><circle cx="12" cy="12" r="5" fill="#d8242a" /><path d="M10 10 L14 14 M14 10 L10 14" stroke="#fff" strokeWidth="1.2" /></Mini>;

/* ---------- scene ---------- */
const SW = 1647, SH = 837, OX = 272, OY = 173;
const vx = (k: number, y: number) => 298.4 + k * 103.8 + 0.06 * (y - 170) - OX;
const hy = (j: number, x: number) => 293 - 0.0577 * (x - 272) + j * 103.6 - OY;

function gridLines() {
  const out: React.ReactNode[] = [];
  for (let i = -10; i < 85; i++) {
    const k = i / 5;
    const major = i % 5 === 0;
    out.push(<line key={`v${i}`} x1={vx(k, OY)} y1={0} x2={vx(k, OY + SH)} y2={SH} stroke={major ? "#373d4b" : "#282f39"} strokeWidth="1" />);
  }
  for (let i = -10; i < 60; i++) {
    const j = i / 5;
    const major = i % 5 === 0;
    out.push(<line key={`h${i}`} x1={0} y1={hy(j, OX)} x2={SW} y2={hy(j, OX + SW)} stroke={major ? "#373d4b" : "#282f39"} strokeWidth="1" />);
  }
  return out;
}

const CubeLetter = styled.text`font: 700 23px "Liberation Sans", sans-serif; fill: #8b8d90;`;

const Compass = () => {
  const cx = 1837 - OX, cy = 280 - OY;
  const letter = (t: string, x: number, y: number) => (
    <CubeLetter x={0} y={0} textAnchor="middle" dominantBaseline="central" transform={`translate(${x - OX} ${y - OY}) rotate(-93)`}>{t}</CubeLetter>
  );
  return <g>
    <circle cx={cx} cy={cy} r={54} fill="none" stroke="#4b5159" strokeWidth="12" />
    {letter("E", 1834, 225)}{letter("S", 1894, 277)}{letter("W", 1841, 337)}{letter("N", 1781, 283)}
    <polygon points={[[1811, 254], [1860, 252], [1863, 302], [1813, 304]].map(([a, b]) => `${a - OX},${b - OY}`).join(" ")} fill="#b4b5b6" />
    <polygon points={[[1820, 262], [1852, 261], [1854, 294], [1822, 295]].map(([a, b]) => `${a - OX},${b - OY}`).join(" ")} fill="#9ea1a5" />
    <text x={0} y={0} textAnchor="middle" dominantBaseline="central" transform={`translate(${1837 - OX} ${278 - OY}) rotate(-93)`} fontSize="12" fontWeight="700" fontFamily="Liberation Sans" fill="#4a4e55">TOP</text>
  </g>;
};

const Scene3D = () => (
  <Scene viewBox={`0 0 ${SW} ${SH}`}>
    {gridLines()}
    <line x1={0} y1={914 - OY} x2={SW} y2={819 - OY} stroke="#237a1e" strokeWidth="1.2" />
    <circle cx={722 - OX} cy={335 - OY} r={64.6} fill="none" stroke="#fff" strokeWidth="1.1" />
    <g stroke="#cfd2d6" strokeWidth="1" strokeDasharray="1 3" fill="none">
      <path d={`M${725 - OX} ${335 - OY} L${772 - OX} ${332 - OY} L${776 - OX} ${397 - OY} L${732 - OX} ${399 - OY}`} />
    </g>
    <rect x={770 - OX} y={331 - OY} width="4" height="3" fill="#fff" />
    <circle cx={776 - OX} cy={397 - OY} r="1.8" fill="#fff" />
    {/* UCS */}
    <path d={`M${317 - OX} ${898 - OY} L${329 - OX} ${909 - OY} M${329 - OX} ${898 - OY} L${317 - OX} ${909 - OY}`} stroke="#e02a2a" strokeWidth="1" />
    <line x1={320 - OX} y1={911 - OY} x2={322 - OX} y2={957 - OY} stroke="#e57373" strokeWidth="5" />
    <line x1={273 - OX} y1={962 - OY} x2={322 - OX} y2={959 - OY} stroke="#4aa045" strokeWidth="5" />
    <path d={`M${273 - OX} ${960 - OY} V${951 - OY} M${273 - OX} ${951 - OY} L${279 - OX} ${949 - OY}`} stroke="#2fcf3a" strokeWidth="1" fill="none" />
    <path d={`M${318 - OX} ${942 - OY} H${331 - OX} L${320 - OX} ${953 - OY} H${331 - OX}`} stroke="#1f6fe8" strokeWidth="1" fill="none" />
    <rect x={319 - OX} y={954 - OY} width="6" height="7" fill="#35578e" />
    <Compass />
  </Scene>
);

/* ---------- data ---------- */
const ribTabs: [string, number][] = [["Home", 50], ["Visualize", 67], ["Insert", 46], ["View", 48], ["Manage", 62], ["Output", 58], ["Add-ins", 62], ["Autodesk 360", 90], ["Express Tools", 92], ["BIM 360", 60], ["Featured Apps", 98]];

type Btn = { l: string; w: number; i: React.ReactNode; c?: boolean; active?: boolean; side?: boolean };
type Pan = { cap: string; w: number; caret?: boolean; corner?: boolean; btns: Btn[]; ml?: number };
const panels: Pan[] = [
  { cap: "Create", w: 227, caret: true, ml: 3, btns: [
    { l: "Torus", w: 52, i: <ITorus />, c: true, active: true }, { l: "Extrude", w: 44, i: <IExtrude /> }, { l: "Revolve", w: 50, i: <IRevolve /> },
    { l: "Loft", w: 34, i: <ILoft /> }, { l: "Sweep", w: 44, i: <ISweep /> }] },
  { cap: "Edit", w: 197, caret: true, btns: [
    { l: "Presspull", w: 56, i: <IPress /> }, { l: "Union", w: 36, i: <IUnion /> }, { l: "Subtract", w: 52, i: <ISubtract /> }, { l: "Intersect", w: 48, i: <IIntersect /> }] },
  { cap: "Draw", w: 115, caret: true, btns: [
    { l: "Line", w: 48, i: <ILine />, c: true }, { l: "Polygon", w: 60, i: <IPoly />, c: true }] },
  { cap: "Modify", w: 243, caret: true, btns: [
    { l: "Move", w: 56, i: <IMove />, c: true }, { l: "Offset", w: 34, i: <IOffset /> }, { l: "Copy", w: 42, i: <ICopy /> }, { l: "Erase", w: 32, i: <IErase /> }, { l: "3D Mirror", w: 78, i: <IMirror />, c: true }] },
  { cap: "Selection", w: 176, btns: [
    { l: "Culling", w: 56, i: <ICulling /> }, { l: "No Filter", w: 54, i: <INoFilter />, c: true }, { l: "Move\nGizmo", w: 70, i: <IGizmo />, side: true }] },
  { cap: "Coordinates", w: 140, corner: true, btns: [
    { l: "World", w: 42, i: <IWorld /> }, { l: "X", w: 34, i: <IX />, c: true }, { l: "3 Point", w: 62, i: <I3P />, c: true }] },
];

const files = ["Gold1_CP_2014_Adjustable Fork", "Gold1_CP_2014_OffsetLink", "Gold1_CP_2014_LazerEngraver", "Gold1_CP_2014_3DTHING", "Gold1_CP_2014_Real3DThing"];

const RibbonButton = ({ b }: { b: Btn }) => (
  <RibBtn $w={b.w} $active={b.active}>
    <RibIcon $active={b.active}>{b.i}</RibIcon>
    <RibLabel $active={b.active}>{b.l}</RibLabel>
    {b.c && <RibCaret><Caret $s={2.5} /></RibCaret>}
    {b.side && <SideCaret><Caret $s={2.5} /></SideCaret>}
  </RibBtn>
);

const Drops = ({ c = "#eee" }: { c?: string }) => <Caret $s={4} $c={c} />;

export default function App() {
  return (
    <Page>
      <Global />
      <DefsSvg>
        <defs>
          <linearGradient id="gW" x1="0" y1="0" x2="0" y2="1"><stop offset="0" stopColor="#ffffff" /><stop offset="1" stopColor="#a6acb6" /></linearGradient>
          <linearGradient id="gB" x1="0" y1="0" x2="0" y2="1"><stop offset="0" stopColor="#dfeafa" /><stop offset="1" stopColor="#93b6e6" /></linearGradient>
          <linearGradient id="gB2" x1="0" y1="0" x2="1" y2="0"><stop offset="0" stopColor="#7fa4dc" /><stop offset=".5" stopColor="#eef3fb" /><stop offset="1" stopColor="#b6c2d2" /></linearGradient>
          <radialGradient id="gOrb" cx=".5" cy=".3" r=".8"><stop offset="0" stopColor="#6da7d8" /><stop offset="1" stopColor="#123a66" /></radialGradient>
          <linearGradient id="gPink" x1="0" y1="0" x2="0" y2="1"><stop offset="0" stopColor="#f3dede" /><stop offset="1" stopColor="#e6a8a8" /></linearGradient>
          <linearGradient id="gTan" x1="0" y1="0" x2="0" y2="1"><stop offset="0" stopColor="#f8f0e2" /><stop offset="1" stopColor="#d8c4a2" /></linearGradient>
        </defs>
      </DefsSvg>

      <AppButton><LogoA s={24} /><Caret $s={3} $c="#cfcfcf" /></AppButton>

      <TitleBar>
        <Qat>
          <QatSlot $w={24}><QNew /></QatSlot><QatSlot $w={24}><QOpen /></QatSlot><QatSlot $w={25}><QSave /></QatSlot>
          <QatSlot $w={23}><QSaveAs /></QatSlot><QatSlot $w={24}><QPrint /></QatSlot><QatSlot $w={24}><QUndo /></QatSlot>
          <QatSlot $w={12}><Caret $s={2.5} $c="#ccc" /></QatSlot><QatSlot $w={26}><QUndo c="#8a8a8a" flip /></QatSlot>
          <QatSlot $w={10}><Caret $s={2.5} $c="#ccc" /></QatSlot><QatSlot $w={17}><QMenu /></QatSlot>
        </Qat>
        <WindowTitle>{"Autodesk AutoCAD 2015 - EDUCATIONAL VERSION    Gold1_CP_2014_Real3DThing.dwg"}</WindowTitle>
        <SearchStrip>
          <SearchSlot $w={15}><svg width="6" height="8"><path d="M0 0 L5 4 L0 8Z" fill="#eee" /></svg></SearchSlot>
          <SearchInput>Type a keyword or phrase</SearchInput>
          <SearchSlot $w={23}><Binoc /></SearchSlot>
          <SearchSlot $w={24}><User /></SearchSlot>
          <SignIn>Sign In</SignIn>
          <SearchSlot $w={12}><Caret $s={2.5} /></SearchSlot>
          <SearchSlot $w={22}><XIcon /></SearchSlot>
          <SearchSlot $w={24}><A360 /></SearchSlot>
          <SearchSlot $w={8}><Caret $s={2.5} /></SearchSlot>
          <Divider />
          <SearchSlot $w={24}><Help /></SearchSlot>
          <SearchSlot $w={10}><Caret $s={2.5} /></SearchSlot>
        </SearchStrip>
        <WinButtons>
          <WinBtn $w={28}><svg width="12" height="5"><rect width="11" height="4" fill="#f2f2f2" stroke="#555" strokeWidth=".5" /></svg></WinBtn>
          <WinBtn $w={28}><svg width="12" height="12"><rect x="3" y="1" width="8" height="7" fill="none" stroke="#eee" strokeWidth="1.2" /><rect x="1" y="4" width="7" height="7" fill="#b9445a" stroke="#eee" strokeWidth="1.4" /></svg></WinBtn>
          <WinBtn $w={47}><svg width="12" height="10"><path d="M1 1 L11 9 M11 1 L1 9" stroke="#f5f5f5" strokeWidth="2.4" /></svg></WinBtn>
        </WinButtons>
      </TitleBar>

      <TabRow>
        {ribTabs.map(([t, w], i) => <RibTab key={t} $w={w} $active={i === 0}>{t}</RibTab>)}
        <ViewToggle><ToggleBox><Caret $s={2} $c="#333" /></ToggleBox><Caret $s={2.5} /></ViewToggle>
      </TabRow>

      <Ribbon>
        {panels.map(p => (
          <Panel key={p.cap} $w={p.w}>
            <PanelBody>
              {p.ml ? <RibBtn $w={p.ml} /> : null}
              {p.btns.map(b => <RibbonButton key={b.l} b={b} />)}
            </PanelBody>
            <PanelCaption $pr={p.corner ? 14 : 0}>
              {p.cap}{p.caret && <Caret $s={4} />}
              {p.corner && <CornerArrow width="7" height="7"><path d="M0 0 L5 5 M5 1 V5.500 H1" stroke="#eee" fill="none" /></CornerArrow>}
            </PanelCaption>
          </Panel>
        ))}
        <Panel $w={264}>
          <PanelBody>
            <RibBtn $w={62}>
              <RibIcon><ILayers /></RibIcon>
              <RibLabel>{"Layer\nProperties"}</RibLabel>
            </RibBtn>
            <ComboStack>
              <Combo><Bulb /><Sun /><Lock /><Swatch /><ComboText>0</ComboText><Drops /></Combo>
              <Combo><Concept /><ComboText>Conceptual</ComboText><Drops /></Combo>
              <Combo><ViewIco /><ComboText>Unsaved View</ComboText><Drops /></Combo>
            </ComboStack>
          </PanelBody>
          <PanelCaption>Layers &amp; View<Caret $s={4} /></PanelCaption>
        </Panel>
      </Ribbon>

      <FileBar>
        <FileTab $w={198} $active>Gold1_CP_2014_Real3DThing*<FileClose>×</FileClose></FileTab>
        <FileTab $w={121}>Drawing1*</FileTab>
        <FileTab $w={122}>New Tab</FileTab>
        <PlusTab>+</PlusTab>
      </FileBar>

      <Main>
        <Palette>
          <PaletteTitle>DRAWING RECOVERY MANAGER</PaletteTitle>
          <SectionHead>Backup Files<Minus /></SectionHead>
          <SectionBody $h={221}>
            {files.map(f => (
              <TreeRow key={f}><Plus>+</Plus><FolderIco /><TreeLabel>{f}</TreeLabel></TreeRow>
            ))}
          </SectionBody>
          <Splitter>{[0, 1, 2, 3, 4].map(i => <Grip key={i} />)}</Splitter>
          <SectionHead>Details<Minus /></SectionHead>
          <SectionBody $h={343} />
          <Splitter />
          <SectionHead>Preview<Minus /></SectionHead>
          <SectionBody $h={164} />
        </Palette>
        <Viewport>
          <Scene3D />
          <ViewLabel>{"[−][Custom View][Conceptual]"}</ViewLabel>
          <DynInput>8<TextCaret /></DynInput>
          <ViewCtl>
            <svg width="11" height="5"><rect width="11" height="3" y="1" fill="#e8e8e8" /></svg>
            <svg width="11" height="11"><rect x="3" y="0.500" width="7" height="7" fill="none" stroke="#e8e8e8" /><rect x="1" y="3" width="7" height="7" fill="#212830" stroke="#e8e8e8" strokeWidth="1.4" /></svg>
            <svg width="10" height="10"><path d="M1 1 L9 9 M9 1 L1 9" stroke="#e8e8e8" strokeWidth="2" /></svg>
          </ViewCtl>
          <WcsPill>WCS<svg width="9" height="6"><path d="M.5 .5 H8.500 L4.500 5.500Z" fill="none" stroke="#5a5e66" /></svg></WcsPill>
          <NavBar>
            <NavClose />
            <NavSlot $h={30}><svg width="24" height="26" viewBox="0 0 24 26" fill="none" stroke="#7f858b" strokeWidth="1"><path d="M12 1 H21 Q23 1 23 5 V13 A11 12 0 1 1 12 1Z" /><circle cx="12" cy="11" r="6" /><path d="M3 19 Q12 13 21 19" /></svg></NavSlot>
            <NavSlot $h={14}><Caret $s={3} $c="#7f858b" /></NavSlot>
            <NavSlot $h={30}><Hand size={24} color="#858b90" strokeWidth={1.2} /></NavSlot>
            <NavSlot $h={24}><svg width="25" height="24" viewBox="0 0 25 24" fill="none" stroke="#7f858b"><path d="M1 1 L16 16 M17 1 L1 17 M1 6 V1 H6 M12 1 H17 V6 M1 12 V17 H6" /><circle cx="15" cy="15" r="4.500" fill="#5a6067" /><path d="M18 19 L23 23" strokeWidth="2.400" /></svg></NavSlot>
            <NavSlot $h={14}><Caret $s={3} $c="#7f858b" /></NavSlot>
            <NavSlot $h={26}><svg width="24" height="24" viewBox="0 0 24 24" fill="none" stroke="#7f858b"><path d="M9 22 V6 H6 L12 1 L18 6 H15 V22Z" /><ellipse cx="12" cy="14" rx="11" ry="4" /><path d="M1 13 L5 10 V16Z" fill="#7f858b" /></svg></NavSlot>
            <NavSlot $h={12}><Caret $s={3} $c="#7f858b" /></NavSlot>
            <NavSlot $h={34}><svg width="24" height="26" viewBox="0 0 24 26" fill="none" stroke="#7f858b"><rect x=".5" y=".5" width="6" height="6" /><rect x="8.500" y=".5" width="6" height="6" /><rect x="16.500" y=".5" width="6" height="6" /><rect x=".5" y="9.500" width="16" height="14" /><path d="M5 12 L13 16.500 L5 21Z" fill="#7f858b" /></svg></NavSlot>
            <NavBottom />
          </NavBar>
          <History>Specify center point or [3P/2P/Ttr]:</History>
          <CmdBar>
            <CmdTools>
              <CmdGrip />
              <svg width="10" height="10"><path d="M1 1 L9 9 M9 1 L1 9" stroke="#f2f2f2" strokeWidth="2" /></svg>
              <Wrench size={16} color="#eee" fill="#ddd" />
            </CmdTools>
            <CmdField>
              <svg width="16" height="16"><circle cx="8" cy="8" r="5.500" fill="none" stroke="#c4c6ca" strokeWidth="3" /></svg>
              <Caret $s={2.5} $c="#999" />
              <span>{" "}<b>TORUS</b>{" Specify radius or ["}<CmdKey><Blue>D</Blue>iameter</CmdKey>{"] <12.0000>:"}</span>
              <CmdUp />
            </CmdField>
          </CmdBar>
        </Viewport>
      </Main>

      <BottomBar>
        <LayoutTabs>
          <LayoutTab $w={57} $active>Model</LayoutTab>
          <LayoutTab $w={63}>Layout1</LayoutTab>
          <LayoutTab $w={63}>Layout2</LayoutTab>
          <LayoutTab $w={24}>+</LayoutTab>
        </LayoutTabs>
        <StatusStrip>
          <StatusGroup $w={48}><SItem $w={46}>MODEL</SItem></StatusGroup>
          <StatusGroup $w={63}><SItem $w={24}><SGrid /></SItem><SItem $w={22}><SDots /></SItem><SItem $w={15}><Drops /></SItem></StatusGroup>
          <StatusGroup $w={168}>
            <SItem $w={26}><SOrtho /></SItem><SItem $w={22}><SPolar /></SItem><SItem $w={16}><Drops /></SItem><SItem $w={24}><SSnap /></SItem><SItem $w={14}><Drops /></SItem>
            <SItem $w={28}><SIso /></SItem><SItem $w={20}><SOsnap /></SItem><SItem $w={16}><Drops /></SItem>
          </StatusGroup>
          <StatusGroup $w={110}>
            <SItem $w={26}><SMan c={St.on} /></SItem><SItem $w={22}><SMan c="#b0b0b0" /></SItem><SItem $w={24}><SMan c="#b0b0b0" /></SItem><SItem $w={24}>1:1</SItem><SItem $w={12}><Drops /></SItem>
          </StatusGroup>
          <StatusGroup $w={65}><SItem $w={25}><Settings size={17} color="#b4b4b4" fill="#b4b4b4" /></SItem><SItem $w={14}><Drops /></SItem><SItem $w={24}><SPlus /></SItem></StatusGroup>
          <StatusGroup $w={26}><SItem $w={24}><SBlue /></SItem></StatusGroup>
          <StatusGroup $w={49}><SItem $w={20}><SLic /></SItem><SItem $w={27}><SIsolate /></SItem></StatusGroup>
          <StatusGroup $w={50}><SItem $w={24}><SClean /></SItem><SItem $w={24}><SMenu /></SItem></StatusGroup>
        </StatusStrip>
      </BottomBar>

      <Taskbar>
        <TaskItem $w={54}><TOrb /></TaskItem>
        <TaskItem $w={68}><TIE /></TaskItem>
        <TaskItem $w={58}><TFolder /></TaskItem>
        <TaskItem $w={66}><TMedia /></TaskItem>
        <TaskItem $w={57} $on={1}><TChrome /></TaskItem>
        <TaskItem $w={53} $ml={5} $on={2}><TAcad /></TaskItem>
        <Sliver />
        <TaskItem $w={64}><TInv /></TaskItem>
        <TaskItem $w={60}><TSketch /></TaskItem>
        <Tray>
          <TraySlot $w={24}><svg width="9" height="5"><path d="M4.500 0 L9 5 H0Z" fill="#eee" /></svg></TraySlot>
          <TraySlot $w={24}><Plug /></TraySlot>
          <TraySlot $w={25}><Signal /></TraySlot>
          <TraySlot $w={24}><Volume /></TraySlot>
          <Clock>8:34 AM<br />1/12/2015</Clock>
          <ShowDesktop />
        </Tray>
      </Taskbar>
    </Page>
  );
}
